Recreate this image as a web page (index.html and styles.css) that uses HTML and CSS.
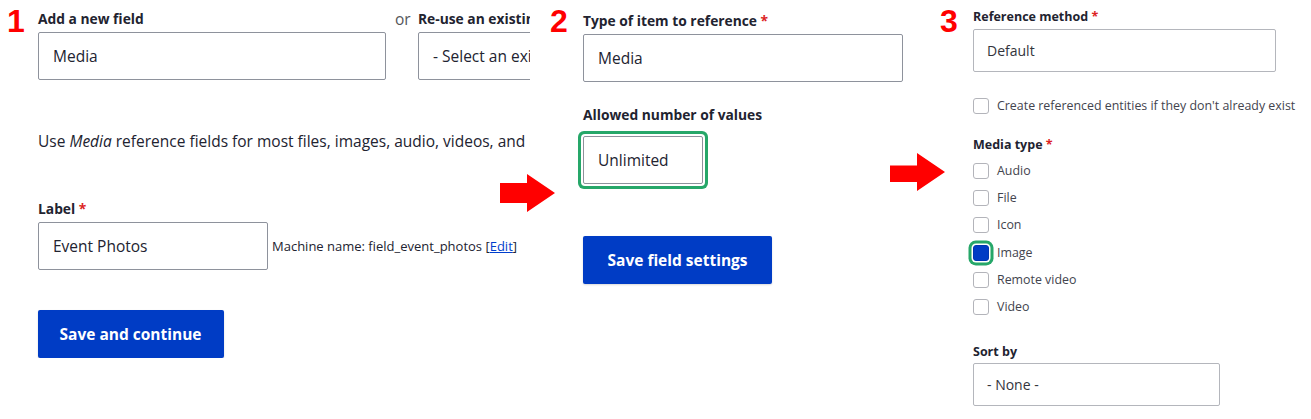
FILE: index.html
```html
<!DOCTYPE html>
<html lang="en">
<head>
<meta charset="utf-8">
<title>Media reference field – steps</title>
<link rel="stylesheet" href="styles.css">
</head>
<body>
<main class="steps">
  <section class="step step-1">
    <div class="step-num">1</div>
    <div class="step-body">
      <div class="field-row">
        <div class="form-item new-field">
          <label class="form-label">Add a new field</label>
          <div class="form-element">Media</div>
        </div>
        <span class="or">or</span>
        <div class="form-item reuse-field">
          <label class="form-label">Re-use an existing field</label>
          <div class="form-element">- Select an existing field -</div>
        </div>
      </div>
      <p class="description">Use <em>Media</em> reference fields for most files, images, audio, videos, and remote media.</p>
      <label class="form-label label-field">Label <span class="req">*</span></label>
      <div class="machine-row">
        <div class="form-element label-input">Event Photos</div>
        <span class="machine-name">Machine name: field_event_photos [<a href="#">Edit</a>]</span>
      </div>
      <button class="button primary save-continue" type="button">Save and continue</button>
    </div>
  </section>

  <section class="step step-2">
    <div class="step-num">2</div>
    <div class="step-body">
      <label class="form-label">Type of item to reference <span class="req">*</span></label>
      <div class="form-element target-type">Media</div>
      <label class="form-label label-allowed">Allowed number of values</label>
      <div class="form-element cardinality focused">Unlimited</div>
      <button class="button primary save-settings" type="button">Save field settings</button>
    </div>
  </section>

  <section class="step step-3">
    <div class="step-num">3</div>
    <div class="step-body">
      <label class="form-label small">Reference method <span class="req">*</span></label>
      <div class="form-element small-el method">Default</div>
      <div class="check-item auto-create"><span class="checkbox"></span><span class="check-label">Create referenced entities if they don't already exist</span></div>
      <label class="form-label small label-media">Media type <span class="req">*</span></label>
      <div class="check-list">
        <div class="check-item"><span class="checkbox"></span><span class="check-label">Audio</span></div>
        <div class="check-item"><span class="checkbox"></span><span class="check-label">File</span></div>
        <div class="check-item"><span class="checkbox"></span><span class="check-label">Icon</span></div>
        <div class="check-item"><span class="checkbox checked"></span><span class="check-label">Image</span></div>
        <div class="check-item"><span class="checkbox"></span><span class="check-label">Remote video</span></div>
        <div class="check-item"><span class="checkbox"></span><span class="check-label">Video</span></div>
      </div>
      <label class="form-label small label-sort">Sort by</label>
      <div class="form-element small-el sort">- None -</div>
    </div>
  </section>
</main>

<svg class="arrow arrow-1" width="55" height="38" viewBox="0 0 55 38" aria-hidden="true"><polygon points="0,9 27,9 27,0 55,19 27,38 27,29 0,29" fill="#ff0000"/></svg>
<svg class="arrow arrow-2" width="55" height="38" viewBox="0 0 55 38" aria-hidden="true"><polygon points="0,12.5 27,12.5 27,0 55,19 27,38 27,29 0,29" fill="#ff0000"/></svg>
</body>
</html>
```

FILE: styles.css
```css
* { box-sizing: border-box; }

html, body {
  margin: 0;
  padding: 0;
  background: #ffffff;
}

body {
  position: relative;
  width: 1311px;
  height: 419px;
  overflow: hidden;
  font-family: "Open Sans", "Noto Sans", sans-serif;
  color: #222330;
}

.steps {
  display: flex;
  align-items: flex-start;
}

.step {
  display: flex;
  align-items: flex-start;
  flex: none;
}

.step-1 {
  width: 530px;
  padding-left: 7px;
  padding-top: 9px;
  overflow: hidden;
}

.step-2 {
  width: 390px;
  margin-left: 20px;
  padding-top: 11px;
}

.step-3 {
  width: 371px;
  padding-top: 8px;
}

.step-num {
  flex: none;
  font-family: "Liberation Sans", Arial, sans-serif;
  font-weight: 700;
  font-size: 32px;
  line-height: 34px;
  color: #ff0000;
}

.step-1 .step-num { width: 31px; margin-top: -5px; }
.step-2 .step-num { width: 33px; margin-top: -7px; }
.step-3 .step-num { width: 33px; margin-top: -4px; }

.step-body { flex: none; }
.step-1 .step-body { width: 620px; }

/* labels */
.form-label {
  display: block;
  font-size: 13.8px;
  font-weight: 700;
  line-height: 20px;
  margin-bottom: 3px;
}

.req { color: #dc2323; }

/* text-like form elements */
.form-element {
  height: 48px;
  border: 1px solid #8e929c;
  border-radius: 2px;
  padding: 0 14px;
  font-size: 15.5px;
  line-height: 46px;
  white-space: nowrap;
  overflow: hidden;
  background: #fff;
}

/* step 1 */
.field-row {
  display: flex;
  align-items: flex-start;
}

.new-field { width: 348px; flex: none; }

.or {
  flex: none;
  width: 32px;
  padding-left: 9px;
  font-size: 15.5px;
  line-height: 20px;
  color: #55565b;
}

.reuse-field { width: 300px; flex: none; }
.reuse-field .form-label { white-space: nowrap; }

.description {
  margin: 49px 0 0;
  font-size: 15.5px;
  line-height: 24px;
  white-space: nowrap;
}

.label-field { margin-top: 46px; }

.machine-row {
  display: flex;
  align-items: center;
}

.label-input { width: 230px; flex: none; }

.machine-name {
  margin-left: 4px;
  font-size: 13px;
  white-space: nowrap;
}

.machine-name a { color: #003ecc; }

.button {
  display: block;
  height: 48px;
  padding: 0 23px;
  border: 0;
  border-radius: 2px;
  font-family: inherit;
  font-size: 15.5px;
  font-weight: 700;
  line-height: 48px;
  cursor: pointer;
}

.button.primary {
  background: #003cc5;
  color: #ffffff;
  box-shadow: 0 1px 2px rgba(0, 0, 0, 0.15);
}

.save-continue { margin-top: 40px; padding: 0 22px 0 21.5px; }
.save-settings { margin-top: 52px; padding: 0 24.5px; }

/* step 2 */
.target-type { width: 320px; }
.label-allowed { margin-top: 23px; margin-bottom: 11px; }
.cardinality { width: 120px; }
.focused { box-shadow: 0 0 0 2px #ffffff, 0 0 0 5px #26a769; border-radius: 2px; }

/* step 3 (screenshot at 90 %) */
.form-label.small { font-size: 12.5px; line-height: 18px; }

.small-el {
  height: 43px;
  border-color: #b4b6bc;
  padding: 0 13px;
  font-size: 14px;
  line-height: 41px;
  color: #33343c;
}

.method { width: 303px; }

.check-item {
  display: flex;
  align-items: center;
  height: 16px;
  font-size: 12.4px;
  line-height: 16px;
  color: #43444e;
  white-space: nowrap;
}

.checkbox {
  flex: none;
  width: 16px;
  height: 16px;
  border: 1px solid #b3b4ba;
  border-radius: 3px;
  background: #fff;
  margin-right: 8px;
}

.checkbox.checked {
  background: #003cc5;
  border-color: #0036b1;
  box-shadow: 0 0 0 1.5px #ffffff, 0 0 0 4.5px #26a769;
}

.auto-create { margin-top: 25.5px; }

.label-media { margin-top: 22.5px; margin-bottom: 9px; }

.check-list {
  display: flex;
  flex-direction: column;
  gap: 11.2px;
}

.label-sort { margin-top: 28px; margin-bottom: 2px; }

.sort { width: 247px; }

/* annotation arrows */
.arrow { position: absolute; display: block; }
.arrow-1 { left: 500px; top: 174px; }
.arrow-2 { left: 890px; top: 153px; }
```
